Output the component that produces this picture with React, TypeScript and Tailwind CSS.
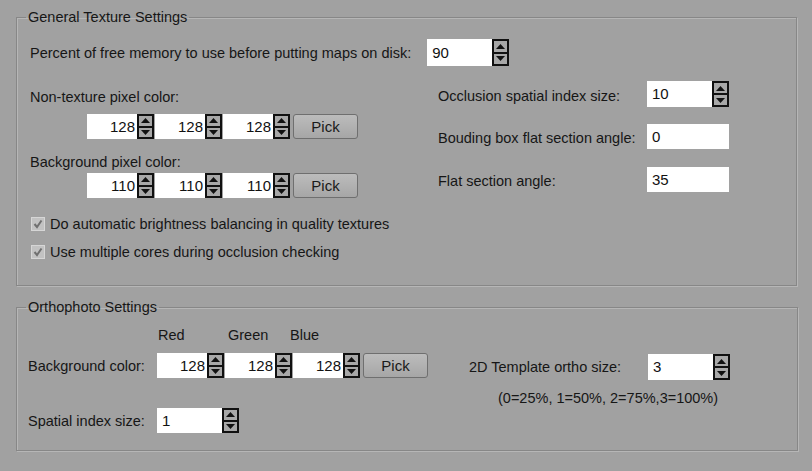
import React from "react";

function Spinner() {
  return (
    <div className="flex flex-col w-[17px] self-stretch border-2 border-[#111] bg-[#a8a8a8]">
      <div className="flex-1 flex items-center justify-center border-b-2 border-[#111]">
        <svg width="9" height="5" viewBox="0 0 9 5">
          <path d="M0 5 L4.5 0 L9 5Z" fill="#111" />
        </svg>
      </div>
      <div className="flex-1 flex items-center justify-center">
        <svg width="9" height="5" viewBox="0 0 9 5">
          <path d="M0 0 L4.5 5 L9 0Z" fill="#111" />
        </svg>
      </div>
    </div>
  );
}

function Num({ v, w, right, spin = true, h = "h-[25px]" }: { v: string; w: string; right?: boolean; spin?: boolean; h?: string }) {
  return (
    <div className={`flex ${h}`}>
      <div
        className={`${w} bg-white flex items-center text-[15px] text-[#111] ${
          right ? "justify-end pr-[2px]" : "pl-[5px]"
        }`}
      >
        {v}
      </div>
      {spin && <Spinner />}
    </div>
  );
}

function Pick() {
  return (
    <div className="w-[65px] h-[25px] rounded-[3px] border border-[#6f6f6f] bg-gradient-to-b from-[#bcbcbc] to-[#a6a6a6] flex items-center justify-center text-[15px] text-[#1a1a1a]">
      Pick
    </div>
  );
}

function ColorRow({ v }: { v: string }) {
  return (
    <div className="flex items-center gap-[1px]">
      <Num v={v} w="w-[50px]" right />
      <Num v={v} w="w-[50px]" right />
      <Num v={v} w="w-[50px]" right />
      <div className="ml-[2px]">
        <Pick />
      </div>
    </div>
  );
}

function Check({ label }: { label: string }) {
  return (
    <div className="flex items-center h-[16px]">
      <div className="ml-[1px] w-[14px] h-[14px] border border-[#d6d6d6] bg-[#c2c2c2] flex items-center justify-center">
        <svg width="10" height="10" viewBox="0 0 10 10">
          <path d="M1.5 5 L4 8 L8.5 1.5" stroke="#707070" strokeWidth="2" fill="none" />
        </svg>
      </div>
      <span className="ml-[5px]">{label}</span>
    </div>
  );
}

export default function App() {
  return (
    <div className="w-[812px] h-[471px] bg-[#a1a1a1] overflow-hidden font-['Liberation_Sans',Arial,sans-serif] text-[14.5px] text-[#161616] leading-[16px] pt-[9px] pl-[16px]">
      <fieldset className="w-[781px] h-[277px] border border-[#878787] shadow-[inset_1px_1px_0_#b6b6b6,1px_1px_0_#b6b6b6] p-0 m-0 min-w-0">
        <legend className="ml-[9px] px-[2px] leading-[16px]">General Texture Settings</legend>
        <div className="pl-[13px]">
          <div className="mt-[14px] flex items-center">
            <span>Percent of free memory to use before putting maps on disk:</span>
            <div className="ml-[16px]">
              <Num v="90" w="w-[65px]" h="h-[27px]" />
            </div>
          </div>
          <div className="flex">
            <div className="w-[408px]">
              <div className="mt-[23px]">Non-texture pixel color:</div>
              <div className="mt-[9px] ml-[57px]">
                <ColorRow v="128" />
              </div>
              <div className="mt-[15px]">Background pixel color:</div>
              <div className="mt-[3px] ml-[57px]">
                <ColorRow v="110" />
              </div>
              <div className="mt-[18px]">
                <Check label="Do automatic brightness balancing in quality textures" />
              </div>
              <div className="mt-[12px]">
                <Check label="Use multiple cores during occlusion checking" />
              </div>
            </div>
            <div>
              <div className="mt-[15px] flex items-center">
                <span className="w-[209px] pt-[3px]">Occlusion spatial index size:</span>
                <Num v="10" w="w-[65px]" h="h-[26px]" />
              </div>
              <div className="mt-[17px] flex items-center">
                <span className="w-[209px] pt-[2px]">Bouding box flat section angle:</span>
                <Num v="0" w="w-[82px]" spin={false} />
              </div>
              <div className="mt-[18px] flex items-center">
                <span className="w-[209px] pt-[2px]">Flat section angle:</span>
                <Num v="35" w="w-[82px]" spin={false} />
              </div>
            </div>
          </div>
        </div>
      </fieldset>

      <fieldset className="mt-[13px] w-[782px] h-[152px] border border-[#878787] shadow-[inset_1px_1px_0_#b6b6b6,1px_1px_0_#b6b6b6] p-0 m-0 min-w-0">
        <legend className="ml-[9px] px-[2px] leading-[16px]">Orthophoto Settings</legend>
        <div className="flex pl-[11px]">
          <div className="w-[441px]">
            <div className="mt-[12px] flex pl-[130px]">
              <span className="w-[70px]">Red</span>
              <span className="w-[62px]">Green</span>
              <span>Blue</span>
            </div>
            <div className="mt-[10px] flex items-center">
              <span className="w-[129px]">Background color:</span>
              <ColorRow v="128" />
            </div>
            <div className="mt-[30px] flex items-center">
              <span className="w-[129px]">Spatial index size:</span>
              <Num v="1" w="w-[65px]" />
            </div>
          </div>
          <div>
            <div className="mt-[39px] flex items-center">
              <span className="w-[179px]">2D Template ortho size:</span>
              <Num v="3" w="w-[65px]" h="h-[26px]" />
            </div>
            <div className="mt-[10px] ml-[29px]">(0=25%, 1=50%, 2=75%,3=100%)</div>
          </div>
        </div>
      </fieldset>
    </div>
  );
}
